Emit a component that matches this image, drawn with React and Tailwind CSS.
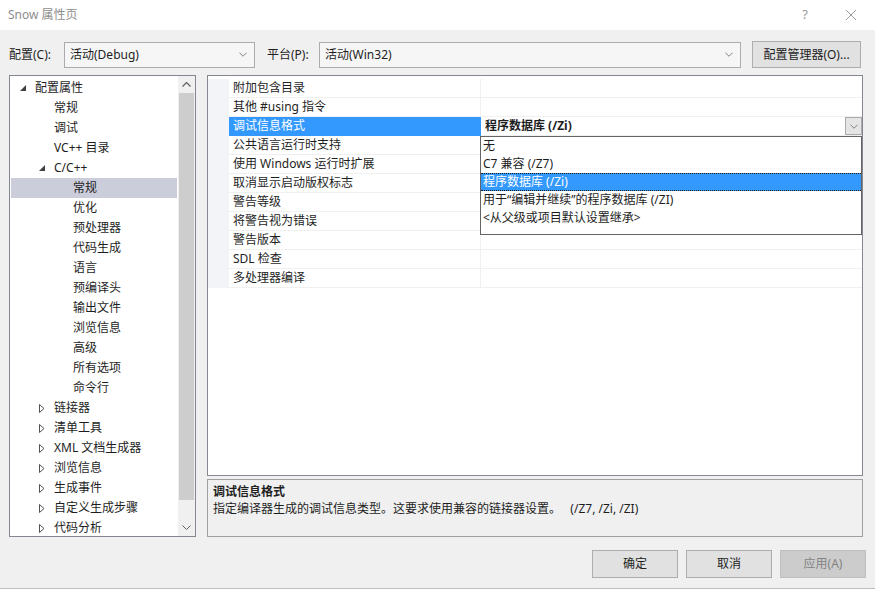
import React from 'react';

const font = { fontFamily: '"Noto Sans", "Noto Sans CJK SC", sans-serif' };

// tree items of the left navigation panel
const treeItems = [
  { t: '配置属性', lvl: 0, exp: 'open' },
  { t: '常规', lvl: 1 },
  { t: '调试', lvl: 1 },
  { t: 'VC++ 目录', lvl: 1 },
  { t: 'C/C++', lvl: 1, exp: 'open' },
  { t: '常规', lvl: 2, sel: true },
  { t: '优化', lvl: 2 },
  { t: '预处理器', lvl: 2 },
  { t: '代码生成', lvl: 2 },
  { t: '语言', lvl: 2 },
  { t: '预编译头', lvl: 2 },
  { t: '输出文件', lvl: 2 },
  { t: '浏览信息', lvl: 2 },
  { t: '高级', lvl: 2 },
  { t: '所有选项', lvl: 2 },
  { t: '命令行', lvl: 2 },
  { t: '链接器', lvl: 1, exp: 'closed' },
  { t: '清单工具', lvl: 1, exp: 'closed' },
  { t: 'XML 文档生成器', lvl: 1, exp: 'closed' },
  { t: '浏览信息', lvl: 1, exp: 'closed' },
  { t: '生成事件', lvl: 1, exp: 'closed' },
  { t: '自定义生成步骤', lvl: 1, exp: 'closed' },
  { t: '代码分析', lvl: 1, exp: 'closed' },
];

const props = [
  '附加包含目录',
  '其他 #using 指令',
  '调试信息格式',
  '公共语言运行时支持',
  '使用 Windows 运行时扩展',
  '取消显示启动版权标志',
  '警告等级',
  '将警告视为错误',
  '警告版本',
  'SDL 检查',
  '多处理器编译',
];

const options = [
  '无',
  'C7 兼容 (/Z7)',
  '程序数据库 (/Zi)',
  '用于“编辑并继续”的程序数据库 (/ZI)',
  '<从父级或项目默认设置继承>',
];

function Chevron({ color = '#606060', w = 9, h = 5 }) {
  return (
    <svg width={w} height={h} viewBox="0 0 9 5">
      <path d="M0.5 0.5 L4.5 4.5 L8.5 0.5" fill="none" stroke={color} strokeWidth="1" />
    </svg>
  );
}

function Expander({ exp }) {
  if (exp === 'open') {
    return (
      <svg width="6" height="6" viewBox="0 0 6 6">
        <path d="M6 0 L6 6 L0 6 Z" fill="#404040" />
      </svg>
    );
  }
  if (exp === 'closed') {
    return (
      <svg width="6" height="9" viewBox="0 0 6 9">
        <path d="M0.5 0.5 L5 4.5 L0.5 8.5 Z" fill="none" stroke="#505050" strokeWidth="1" />
      </svg>
    );
  }
  return null;
}

function Combo({ text, className }) {
  return (
    <div className={`h-[26px] flex items-center justify-between border border-[#acacac] bg-[#f6f6f6] pl-[5px] pr-[7px] ${className}`}>
      <span className="text-[12px] text-[#1e1e1e]">{text}</span>
      <Chevron color="#707070" w={8} h={5} />
    </div>
  );
}

export default function App() {
  return (
    <div className="w-[875px] h-[589px] bg-[#f0f0f0] flex flex-col overflow-hidden border-b border-[#bdbdbd]" style={font}>
      {/* 标题栏 */}
      <div className="h-[30px] bg-white flex items-center pl-[8px] shrink-0">
        <span className="text-[12px] text-[#8e8e8e]">Snow 属性页</span>
        <div className="ml-auto flex items-center">
          <span className="text-[13px] text-[#9a9a9a]">?</span>
          <svg width="10" height="10" viewBox="0 0 10 10" className="mr-[19px] ml-[38px]">
            <path d="M0 0 L10 10 M10 0 L0 10" stroke="#9a9a9a" strokeWidth="1" />
          </svg>
        </div>
      </div>

      {/* 配置 / 平台 */}
      <div className="flex items-center pt-[11px] pl-[9px] pr-[14px] shrink-0">
        <span className="text-[12px] text-[#1e1e1e] w-[55px]">配置(C):</span>
        <Combo text="活动(Debug)" className="w-[191px]" />
        <span className="text-[12px] text-[#1e1e1e] ml-[12px] w-[52px]">平台(P):</span>
        <Combo text="活动(Win32)" className="w-[422px]" />
        <button className="ml-auto h-[27px] w-[109px] bg-[#e1e1e1] border border-[#adadad] text-[12px] text-[#1e1e1e]">
          配置管理器(O)...
        </button>
      </div>

      {/* 主体 */}
      <div className="flex mt-[7px] pl-[9px] h-[462px] shrink-0">
        {/* 左侧树 */}
        <div className="w-[187px] h-full bg-white border border-[#828790] flex">
          <div className="flex-1 pt-[2px] pl-[1px] pr-[1px]">
            {treeItems.map((it, i) => (
              <div
                key={i}
                className={`h-[20px] flex items-center text-[12px] text-[#1e1e1e] ${it.sel ? 'bg-[#cbcdda]' : ''}`}
                style={{ paddingLeft: 5 + it.lvl * 19 }}
              >
                <div className="w-[19px] pl-[4px] flex items-center">
                  <Expander exp={it.exp} />
                </div>
                <span>{it.t}</span>
              </div>
            ))}
          </div>
          <div className="w-[17px] h-full bg-[#f0f0f0] flex flex-col items-center">
            <div className="h-[17px] flex items-center justify-center">
              <svg width="9" height="5" viewBox="0 0 9 5">
                <path d="M0.5 4.5 L4.5 0.5 L8.5 4.5" fill="none" stroke="#606060" strokeWidth="1.2" />
              </svg>
            </div>
            <div className="w-[15px] h-[407px] bg-[#cdcdcd]" />
            <div className="mt-auto h-[17px] flex items-center justify-center">
              <Chevron color="#606060" />
            </div>
          </div>
        </div>

        {/* 右侧属性网格 + 说明 */}
        <div className="ml-[11px] w-[656px] h-full flex flex-col">
          <div className="relative h-[401px] bg-white border border-[#828790] pt-[3px]">
            {props.map((p, i) => {
              const sel = i === 2;
              return (
                <div key={i} className="h-[19px] flex">
                  <div className="w-[21px] bg-[#f2f4f8]" />
                  <div
                    className={`w-[252px] flex items-center pl-[4px] text-[12px] border-b border-r ${
                      sel ? 'bg-[#3399ff] text-white border-[#3399ff]' : 'text-[#1e1e1e] border-[#f0f0f0]'
                    }`}
                  >
                    {p}
                  </div>
                  <div className="flex-1 flex items-center pl-[4px] text-[12px] border-b border-[#f0f0f0]">
                    {sel && (
                      <>
                        <span className="font-bold text-[#1e1e1e]">程序数据库 (/Zi)</span>
                        <div className="ml-auto w-[17px] h-[18px] bg-[#e5e5e5] border border-[#acacac] flex items-center justify-center">
                          <Chevron color="#707070" w={8} h={5} />
                        </div>
                      </>
                    )}
                  </div>
                </div>
              );
            })}

            {/* 下拉列表 */}
            <div className="absolute left-[272px] top-[60px] w-[382px] h-[99px] bg-white border border-[#646464]">
              {options.map((o, i) => (
                <div
                  key={i}
                  className={`h-[18px] flex items-center pl-[2px] text-[12px] ${
                    i === 2 ? 'bg-[#3399ff] text-white border-y border-dotted border-[#1e1e1e]' : 'text-[#1e1e1e]'
                  }`}
                >
                  {o}
                </div>
              ))}
            </div>
          </div>

          <div className="mt-[3px] flex-1 bg-[#f0f0f0] border border-[#a0a0a0] pl-[5px] pt-[3px] text-[12px] text-[#1e1e1e]">
            <div className="font-bold leading-[17px]">调试信息格式</div>
            <div className="leading-[17px]">指定编译器生成的调试信息类型。这要求使用兼容的链接器设置。&nbsp;&nbsp;&nbsp;(/Z7, /Zi, /ZI)</div>
          </div>
        </div>
      </div>

      {/* 底部按钮 */}
      <div className="flex justify-end gap-[8px] pr-[9px] mt-[13px]">
        <button className="w-[86px] h-[28px] bg-[#e1e1e1] border border-[#adadad] text-[12px] text-[#1e1e1e]">确定</button>
        <button className="w-[86px] h-[28px] bg-[#e1e1e1] border border-[#adadad] text-[12px] text-[#1e1e1e]">取消</button>
        <button className="w-[86px] h-[28px] bg-[#cccccc] border border-[#bfbfbf] text-[12px] text-[#838383]">应用(A)</button>
      </div>
    </div>
  );
}
